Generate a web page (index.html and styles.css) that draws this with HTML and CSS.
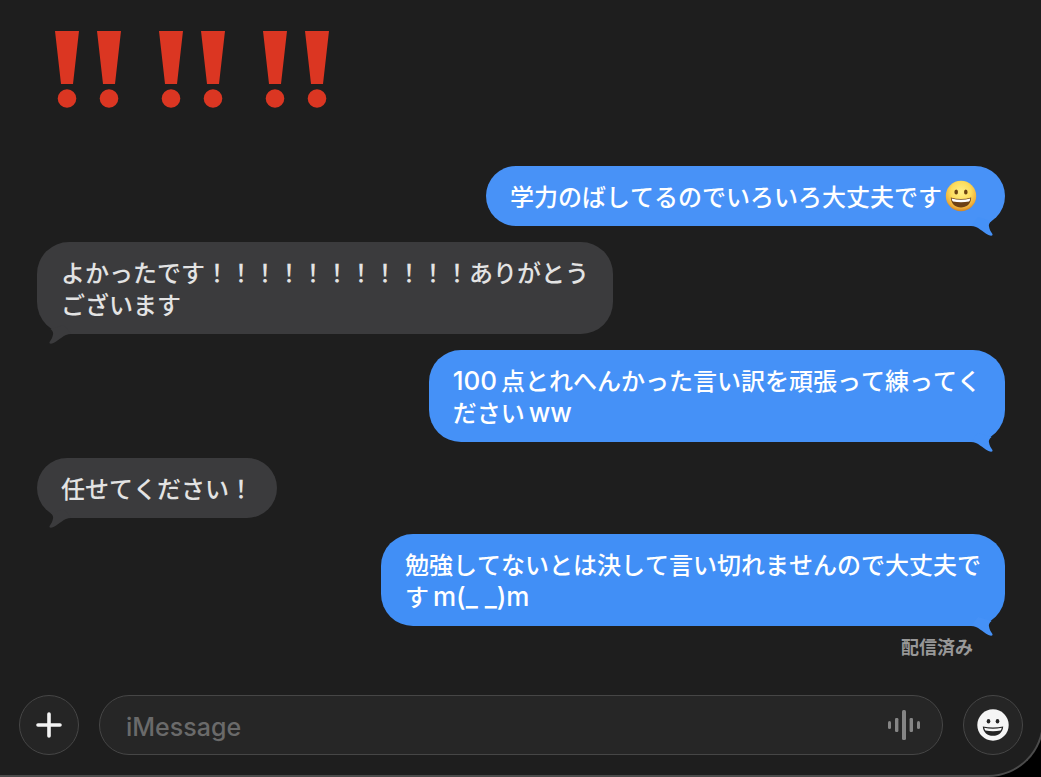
FILE: index.html
```html
<!DOCTYPE html>
<html lang="ja">
<head>
<meta charset="utf-8">
<meta name="viewport" content="width=device-width, initial-scale=1">
<title>iMessage</title>
<link rel="stylesheet" href="styles.css">
</head>
<body>
<svg class="defs" aria-hidden="true">
  <defs>
    <symbol id="double-bang" viewBox="0 0 66 77">
      <path d="M0 0H24L18 53H6ZM42 0H66L60 53H48Z"/>
      <circle cx="12" cy="67.500" r="9.300"/>
      <circle cx="54" cy="67.500" r="9.300"/>
    </symbol>
    <symbol id="tail" viewBox="0 0 24 24">
      <path d="M21.500 7C19 9 18.600 11 19 12.600C19.500 16 21 18 22.300 19.800C23.300 21.700 21.400 22.200 18.500 21C12 18 8.500 12 1 12L8 3Z"/>
    </symbol>
  </defs>
</svg>
<div class="window">
  <main class="thread">
    <div class="bangs" role="img" aria-label="‼️‼️‼️">
      <svg class="bang"><use href="#double-bang"/></svg>
      <svg class="bang"><use href="#double-bang"/></svg>
      <svg class="bang"><use href="#double-bang"/></svg>
    </div>

    <div class="bubble sent with-emoji">
      <p class="text">学力のばしてるのでいろいろ大丈夫です<svg class="emoji" viewBox="0 0 32 32" role="img" aria-label="😀">
        <defs>
          <radialGradient id="face" cx="0.5" cy="0.36" r="0.66">
            <stop offset="0" stop-color="#fff08a"/>
            <stop offset="0.5" stop-color="#fddc5c"/>
            <stop offset="0.82" stop-color="#efae3a"/>
            <stop offset="1" stop-color="#c97a22"/>
          </radialGradient>
        </defs>
        <circle cx="16" cy="16" r="15.200" fill="url(#face)"/>
        <ellipse cx="11.200" cy="12" rx="1.800" ry="2.500" fill="#6b4312"/>
        <ellipse cx="20.800" cy="12" rx="1.800" ry="2.500" fill="#6b4312"/>
        <path d="M5.800 17.500Q16 20.500 26.200 17.500C26 24 21.500 27.500 16 27.500S6 24 5.800 17.500Z" fill="#6d4115"/>
        <path d="M6.600 18.400Q16 21.200 25.400 18.400Q25 20.800 24 21.600Q16 23 8 21.600Q7 20.800 6.600 18.400Z" fill="#fff"/>
      </svg></p>
      <svg class="tail"><use href="#tail"/></svg>
    </div>

    <div class="bubble received">
      <p class="text">よかったです！！！！！！！！！！！ありがとう<br>ございます</p>
      <svg class="tail"><use href="#tail"/></svg>
    </div>

    <div class="bubble sent second">
      <p class="text"><span class="latin lead">100</span>点とれへんかった言い訳を頑張って練ってく<br>ださい<span class="latin trail">ww</span></p>
      <svg class="tail"><use href="#tail"/></svg>
    </div>

    <div class="bubble received">
      <p class="text">任せてください！</p>
      <svg class="tail"><use href="#tail"/></svg>
    </div>

    <div class="bubble sent third">
      <p class="text">勉強してないとは決して言い切れませんので大丈夫で<br>す<span class="latin trail">m(_ _)m</span></p>
      <svg class="tail"><use href="#tail"/></svg>
    </div>
    <p class="status">配信済み</p>
  </main>

  <form class="composer">
    <button class="round" type="button" aria-label="追加">
      <svg class="icon" viewBox="0 0 32 32"><path d="M16 5V27M5 16H27" stroke="#f4f4f4" stroke-width="3.600" stroke-linecap="round"/></svg>
    </button>
    <div class="field">
      <input class="entry" type="text" placeholder="iMessage" aria-label="iMessage">
      <button class="audio" type="button" aria-label="オーディオを録音">
        <svg class="icon" viewBox="0 0 32 32" fill="#858585">
          <rect x="0" y="12" width="3" height="8" rx="1.500"/>
          <rect x="7" y="9" width="3.400" height="14" rx="1.200"/>
          <rect x="14" y="1" width="4" height="30" rx="1.500"/>
          <rect x="21.600" y="9" width="3.400" height="14" rx="1.200"/>
          <rect x="29" y="12" width="3" height="8" rx="1.500"/>
        </svg>
      </button>
    </div>
    <button class="round" type="button" aria-label="絵文字">
      <svg class="icon" viewBox="0 0 32 32">
        <circle cx="16" cy="16" r="15.700" fill="#f5f5f5"/>
        <ellipse cx="11.500" cy="12.200" rx="1.800" ry="2.300" fill="#242424"/>
        <ellipse cx="20.500" cy="12.200" rx="1.800" ry="2.300" fill="#242424"/>
        <path d="M5.800 17.500Q16 19.600 26.200 17.500C25.800 23.600 21.500 26.800 16 26.800S6.200 23.600 5.800 17.500Z" fill="#242424"/>
        <path d="M7.200 18.800Q16 20.600 24.800 18.800Q24.300 20.800 23.600 21.400Q16 23 8.400 21.400Q7.700 20.800 7.200 18.800Z" fill="#f5f5f5"/>
      </svg>
    </button>
  </form>
</div>
</body>
</html>
```
FILE: styles.css
```css
* {
  box-sizing: border-box;
}

body {
  margin: 0;
  background: #000;
  overflow-x: hidden;
  font-family: "Noto Sans CJK JP", sans-serif;
}

.defs {
  position: absolute;
  width: 0;
  height: 0;
}

.window {
  display: flex;
  flex-direction: column;
  min-height: 100vh;
  margin-right: -3px;
  padding-right: 1px;
  background: #1e1e1e;
  border: solid #4b4b4b;
  border-width: 0 2px 2px 0;
  border-radius: 0 0 56px 0;
}

.thread {
  flex: 1;
  display: flex;
  flex-direction: column;
  gap: 16px;
  padding: 31px 36px 24px 37px;
}

.bangs {
  display: flex;
  gap: 38px;
  margin: 0 0 42px 18px;
}

.bang {
  width: 66px;
  height: 77px;
  fill: #db3622;
}

.bubble {
  position: relative;
  padding: 14px 24px;
  border-radius: 32px;
}

.sent {
  align-self: flex-end;
  background: #4892f7;
  color: #fff;
}

.second {
  background: #4591f7;
}

.third {
  background: #418ff6;
}

.with-emoji {
  padding-right: 28px;
}

.received {
  align-self: flex-start;
  background: #3b3b3d;
  color: #e3e3e3;
}

.text {
  margin: 0;
  font-size: 24px;
  font-weight: 500;
  font-kerning: none;
  line-height: 32px;
}

.latin {
  font-family: Inter, sans-serif;
  font-size: 26px;
  line-height: 24px;
}

.lead {
  margin-right: 4px;
}

.trail {
  margin-left: 4px;
}

.emoji {
  width: 32px;
  height: 32px;
  margin-left: 3px;
  vertical-align: top;
}

.tail {
  position: absolute;
  bottom: -12px;
  width: 24px;
  height: 24px;
}

.sent .tail {
  right: 11px;
  fill: #4591f7;
}

.received .tail {
  left: 11px;
  fill: #3b3b3d;
  transform: scaleX(-1);
}

.status {
  align-self: flex-end;
  margin: -8px 32px 0 0;
  color: #989898;
  font-size: 18px;
  font-weight: 700;
  line-height: 24px;
}

.composer {
  display: flex;
  gap: 20px;
  padding: 0 18px 20px 19px;
}

.round {
  display: grid;
  place-items: center;
  flex: none;
  width: 60px;
  height: 60px;
  padding: 0;
  border: 1px solid #464646;
  border-radius: 50%;
  background: #252525;
}

.icon {
  display: block;
  width: 32px;
  height: 32px;
}

.field {
  flex: 1;
  display: flex;
  align-items: center;
  min-width: 0;
  height: 60px;
  padding: 0 22px 0 26px;
  border: 1px solid #464646;
  border-radius: 30px;
  background: #262626;
}

.entry {
  flex: 1;
  min-width: 0;
  padding: 4px 0 0;
  border: 0;
  outline: 0;
  background: transparent;
  color: #e3e3e3;
  font-family: Inter, "Noto Sans CJK JP", sans-serif;
  font-size: 25px;
  font-weight: 500;
}

.entry::placeholder {
  color: #6a6a6a;
  opacity: 1;
}

.audio {
  padding: 0;
  border: 0;
  background: transparent;
}
```
